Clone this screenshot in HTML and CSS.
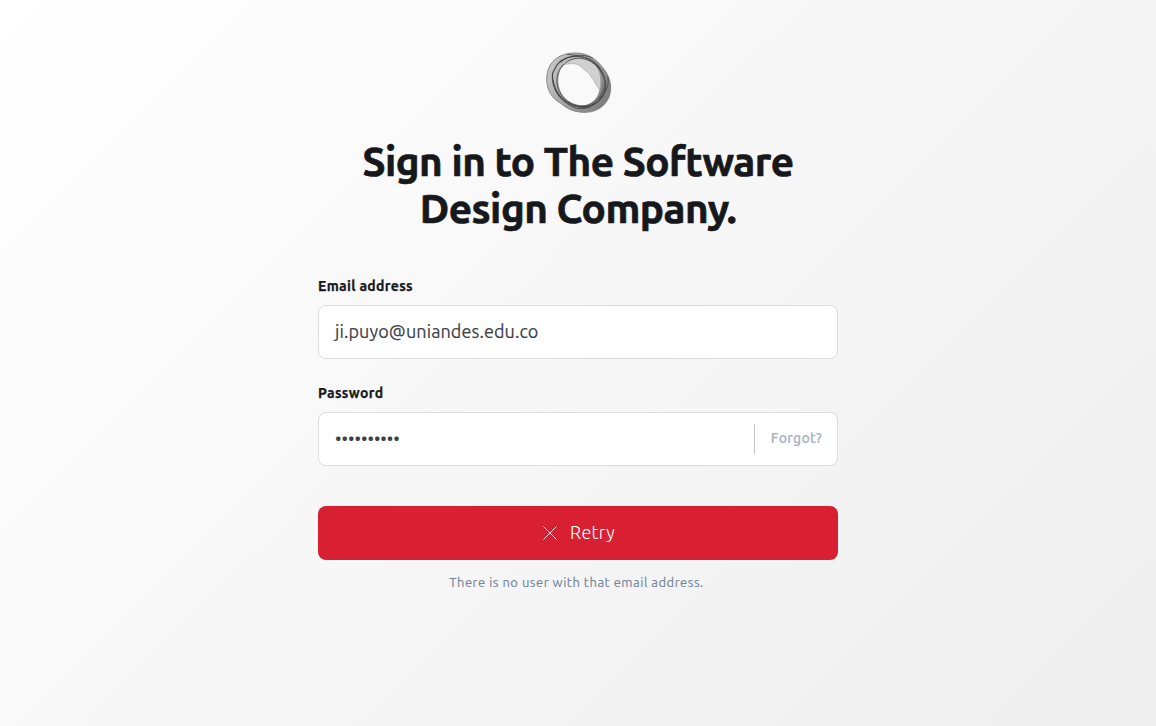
FILE: index.html
```html
<!DOCTYPE html>
<html lang="en">
<head>
<meta charset="utf-8">
<title>Sign in</title>
<link rel="stylesheet" href="styles.css">
</head>
<body>
<main class="signin">
  <svg class="logo" viewBox="0 0 80 80" aria-hidden="true">
    <defs>
      <linearGradient id="ring" x1="0" y1=".2" x2="1" y2=".7">
        <stop offset="0" stop-color="#c9c9c9"/><stop offset=".5" stop-color="#a2a2a2"/><stop offset="1" stop-color="#7c7c7c"/>
      </linearGradient>
    </defs>
    <g transform="translate(.7 .3)">
    <path fill="url(#ring)" fill-rule="evenodd" stroke="#777" stroke-width=".8" d="M8 37C8 22 17 13 31 11C46 9 56 15 63 24C70 32 74 42 71 53C67 65 56 71 43 70C33 69 28 66 22 61C13 56 8 48 8 37ZM20 31C17 42 21 53 30 60C38 66 49 65 56 58C63 51 63 39 60 33C56 25 47 19 37 19C28 19 22 23 20 31Z"/>
    <path fill="#d0d0d0" stroke="#a5a5a5" stroke-width=".6" d="M22 23C29 16 45 13 54 20C60 24 64 35 61 48C57 43 56 38 52 34C50 29 46 29 43 25C39 20 30 21 22 23Z"/>
    <path fill="none" stroke="#3f3f3f" stroke-width="1.1" d="M16 27C20 16 34 12 45 15C59 19 67 33 67 44C66 58 54 66 40 64C27 62 18 53 15 41C13 34 14 29 16 27"/>
    <path fill="none" stroke="#5a5a5a" stroke-width="1" d="M28 12C44 13 55 17 60 24C67 34 68 42 62 53C55 64 44 66 33 61C21 55 16 44 19 32C21 24 29 17 38 16C49 15 58 22 63 31C69 41 67 48 61 55"/>
    <path fill="none" stroke="#4b4b4b" stroke-width=".9" d="M22 20C30 12 45 11 54 16M14 30C12 44 19 57 33 64C42 69 54 66 61 57M17 48C23 59 35 67 51 65M69 34C71 44 67 51 60 57"/>
    </g>
  </svg>
  <h1 class="title">Sign in to The Software<br>Design Company.</h1>
  <form class="form">
    <label class="label label-email">Email address</label>
    <div class="field"><span class="value">ji.puyo@uniandes.edu.co</span></div>
    <label class="label label-password">Password</label>
    <div class="field">
      <span class="dots">••••••••••</span>
      <a class="forgot">Forgot?</a>
    </div>
    <button class="retry" type="button">
      <svg class="cross" viewBox="0 0 14 14" aria-hidden="true"><path d="M.5 .5l13 13M13.5 .5l-13 13"/></svg>
      <span class="retry-text">Retry</span>
    </button>
    <p class="message">There is no user with that email address.</p>
  </form>
</main>
</body>
</html>
```
FILE: styles.css
```css
* { box-sizing: border-box; }
html { height: 100%; }
body {
  margin: 0;
  height: 726px;
  overflow: hidden;
  background: linear-gradient(135deg, #fff 0%, #eee 100%);
  font-family: Ubuntu, "Noto Sans", sans-serif;
  color: #16181c;
}
.signin {
  width: 520px;
  margin: 0 auto;
  padding-top: 42px;
  display: flex;
  flex-direction: column;
  align-items: center;
}
.logo { width: 80px; height: 80px; display: block; }
.title {
  margin: 16px 0 0;
  font-size: 40.5px;
  line-height: 47px;
  font-weight: 700;
  letter-spacing: -.5px;
  -webkit-text-stroke: .7px #16181c;
  text-align: center;
  white-space: nowrap;
}
.form { width: 520px; margin-top: 44px; display: flex; flex-direction: column; }
.label { font-size: 14px; line-height: 20px; font-weight: 700; height: 20px; letter-spacing: .33px; -webkit-text-stroke: .25px #16181c; }
.label-password { margin-top: 24px; }
.field {
  height: 54px;
  margin-top: 9px;
  padding: 0 15px 0 16px;
  display: flex;
  align-items: center;
  justify-content: space-between;
  background: #fff;
  border: 1px solid #dcdcde;
  border-radius: 8px;
}
.value, .dots { font-size: 18px; line-height: 24px; padding-bottom: 2px; color: #3c4149; }
.value { letter-spacing: .1px; -webkit-text-stroke: .15px #3c4149; }
.forgot {
  height: 30px;
  padding-left: 16px;
  border-left: 1px solid #c4c4c4;
  font-size: 14px;
  line-height: 28px;
  font-weight: 500;
  letter-spacing: .3px;
  color: #a9b2bf;
  -webkit-text-stroke: .15px #a9b2bf;
}
.retry {
  height: 54px;
  margin-top: 40px;
  padding: 0 0 0 2px;
  border: 0;
  border-radius: 8px;
  background: #d82032;
  color: #fff;
  font-family: inherit;
  display: flex;
  align-items: center;
  justify-content: center;
  gap: 13px;
}
.cross { width: 14px; height: 14px; fill: none; stroke: #fff; stroke-width: .9; }
.retry-text { font-size: 18px; line-height: 24px; padding-bottom: 2px; font-weight: 300; letter-spacing: .3px; }
.message { margin: 12px 3px 0 0; text-align: center; font-size: 13px; line-height: 20px; letter-spacing: .5px; color: #74869a; -webkit-text-stroke: .15px #74869a; }
```
